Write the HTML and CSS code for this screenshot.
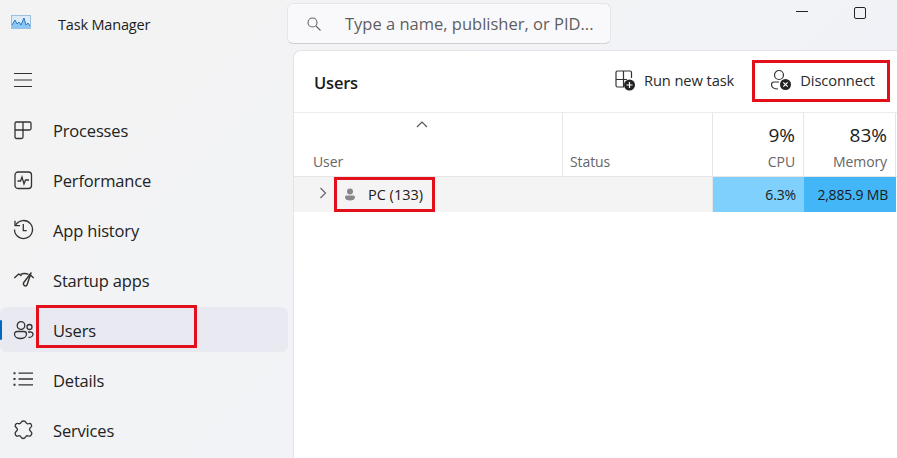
FILE: index.html
```html
<!DOCTYPE html>
<html lang="en">
<head>
<meta charset="utf-8">
<title>Task Manager</title>
<link rel="stylesheet" href="styles.css">
</head>
<body>
<div class="app">
  <aside class="sidebar">
    <div class="brand">
      <svg class="logo" width="20" height="14" viewBox="0 0 20 14"><rect x="0.5" y="0.5" width="19" height="13" fill="#dcebf8" stroke="#9cc0de"/><path d="M1 13V10L4 5L6 9L8 7L10 10L13 3L15 10L17 8L19 11V13Z" fill="#8cc6f2"/><path d="M1 10L4 5L6 9L8 7L10 10L13 3L15 10L17 8L19 11" fill="none" stroke="#2a78c4" stroke-width="1"/></svg>
      <span class="brand-name">Task Manager</span>
    </div>
    <div class="menu">
      <svg class="icon" width="20" height="20" viewBox="0 0 20 20"><path d="M1 4.500H19M1 11H19M1 17.500H19" stroke="#333" stroke-width="1.200" fill="none"/></svg>
    </div>
    <nav class="nav">
      <div class="nav-item">
        <svg class="icon" width="20" height="20" viewBox="0 0 20 20" fill="none" stroke="#333" stroke-width="1.300"><path d="M1 10V3.500A1.500 1.500 0 0 1 2.500 2H15.500A1.500 1.500 0 0 1 17 3.500V8.500A1.500 1.500 0 0 1 15.500 10H9V17A1.500 1.500 0 0 1 7.500 18.500H2.500A1.500 1.500 0 0 1 1 17Z"/><path d="M9 2V10H1"/></svg>
        <span>Processes</span>
      </div>
      <div class="nav-item">
        <svg class="icon" width="20" height="20" viewBox="0 0 20 20" fill="none" stroke="#333" stroke-width="1.300"><rect x="1" y="2" width="16.500" height="16.500" rx="3"/><path d="M3.500 11H6.500L8 7L10 14L11.500 10H15"/></svg>
        <span>Performance</span>
      </div>
      <div class="nav-item">
        <svg class="icon" width="20" height="20" viewBox="0 0 20 20" fill="none" stroke="#333" stroke-width="1.300"><path d="M1.700 5A9 9 0 1 1 0.500 9.500"/><path d="M1 0.700V5.700H6"/><path d="M9.300 4V10.700H12.700"/></svg>
        <span>App history</span>
      </div>
      <div class="nav-item">
        <svg class="icon" width="20" height="20" viewBox="-1 0 20 20" fill="none" stroke="#333" stroke-width="1.400" stroke-linejoin="round"><path d="M-0.700 8L3.700 4L6.500 5.800"/><path d="M5.500 4.300C8 3.300 11 3.300 13.500 4.300"/><path d="M14.500 4.300L18.700 8"/><path d="M16 3L8.800 12.500A2 2 0 0 0 12 15Z"/></svg>
        <span>Startup apps</span>
      </div>
      <div class="nav-item is-active">
        <svg class="icon" width="20" height="20" viewBox="0 0 20 20" fill="none" stroke="#333" stroke-width="1.300"><circle cx="7" cy="5.500" r="3.800"/><circle cx="15.500" cy="7" r="2.500"/><path d="M0.500 14A2.500 2.500 0 0 1 3 11.500H10A2.500 2.500 0 0 1 12.500 14C12.500 17 9.500 18.500 6.500 18.500S0.500 17 0.500 14Z"/><path d="M14 12H16.500A2.500 2.500 0 0 1 19 14C19 16 17 17.500 14.500 17.500"/></svg>
        <span>Users</span>
      </div>
      <div class="nav-item">
        <svg class="icon" width="20" height="20" viewBox="0 0 20 20" fill="none" stroke="#333" stroke-width="1.300"><path d="M4.500 3.200H19M4.500 9H19M4.500 14.800H19"/><path d="M-0.500 3.200H1.500M-0.500 9H1.500M-0.500 14.800H1.500" stroke-width="2"/></svg>
        <span>Details</span>
      </div>
      <div class="nav-item">
        <svg class="icon" width="20" height="20" viewBox="0 0 20 20" fill="none" stroke="#333" stroke-width="1.300" stroke-linejoin="round"><path d="M7 2.500C8 0.500 11 0.500 12 2.500C12.500 3.800 14 4 15.500 3.500C17 3.200 18 5.500 17.500 6.500C16.800 7.500 15.500 8 15.500 9.500C15.500 10.800 17.500 11.500 17.800 13C18 15 16 16.500 14.500 16C13 15.500 12 15.800 11.500 17C10.500 19 8 19 7 17C6.500 15.800 5 15.500 4 16C2.500 16.500 0.800 15 1.200 13C1.500 11.500 3.500 11 3.500 9.500C3.500 8 1.500 7.500 1.200 6C1 4.500 2.500 3 4 3.500C5 4 6.500 3.800 7 2.500Z"/></svg>
        <span>Services</span>
      </div>
    </nav>
  </aside>
  <div class="content">
    <div class="topbar">
      <div class="search">
        <svg class="search-icon" width="14" height="14" viewBox="0 0 14 14" fill="none" stroke="#666" stroke-width="1.100"><circle cx="5.500" cy="5.500" r="4.500"/><path d="M9 9L13.500 13.500"/></svg>
        <span class="search-text">Type a name, publisher, or PID...</span>
      </div>
      <div class="window-controls">
        <span class="win-min"></span>
        <span class="win-max"></span>
      </div>
    </div>
    <main class="panel">
      <header class="panel-head">
        <h1 class="panel-title">Users</h1>
        <div class="actions">
          <div class="action action-run">
            <svg width="21" height="21" viewBox="0 0 21 21" fill="none" stroke="#333" stroke-width="1.200"><path d="M1 10V2.500A1.500 1.500 0 0 1 2.500 1H15A1.500 1.500 0 0 1 16.500 2.500V8M8.500 1V17H2.500A1.500 1.500 0 0 1 1 15.500V9.500H12"/><circle cx="14.500" cy="15" r="5.500" fill="#222" stroke="none"/><path d="M14.500 12V18M11.500 15H17.500" stroke="#fff"/></svg>
            <span>Run new task</span>
          </div>
          <div class="action action-disconnect">
            <svg width="22" height="22" viewBox="0 0 22 22" fill="none" stroke="#333" stroke-width="1.200"><circle cx="9" cy="6" r="4.500"/><path d="M9 13H4A2.500 2.500 0 0 0 1.500 15.500C1.500 18 4 20 8 20"/><circle cx="15.500" cy="15.500" r="5.500" fill="#222" stroke="none"/><path d="M13.300 13.300L17.700 17.700M17.700 13.300L13.300 17.700" stroke="#fff"/></svg>
            <span>Disconnect</span>
          </div>
        </div>
      </header>
      <div class="table">
        <div class="th th-user">
          <svg class="sort" width="12" height="7" viewBox="0 0 12 7" fill="none" stroke="#555" stroke-width="1.200"><path d="M1 6L6 1L11 6"/></svg>
          <span class="th-label">User</span>
        </div>
        <div class="th th-status"><span class="th-label">Status</span></div>
        <div class="th th-num"><span class="th-value">9%</span><span class="th-label">CPU</span></div>
        <div class="th th-num"><span class="th-value">83%</span><span class="th-label">Memory</span></div>
        <div class="th th-end"></div>
        <div class="td td-user">
          <svg class="chevron" width="8" height="12" viewBox="0 0 8 12" fill="none" stroke="#666" stroke-width="1.200"><path d="M1.500 1L6.500 6L1.500 11"/></svg>
          <svg class="person" width="12" height="14" viewBox="0 0 12 14" fill="#888"><circle cx="6" cy="3.500" r="3"/><path d="M1 9A1.500 1.500 0 0 1 2.500 7.500H9.500A1.500 1.500 0 0 1 11 9C11 11.500 9 12.500 6 12.500S1 11.500 1 9Z"/></svg>
          <span>PC (133)</span>
        </div>
        <div class="td td-status"></div>
        <div class="td td-cpu">6.3%</div>
        <div class="td td-mem">2,885.9 MB</div>
        <div class="td td-end"></div>
      </div>
    </main>
  </div>
</div>
<div class="mark mark-users"></div>
<div class="mark mark-pc"></div>
<div class="mark mark-disconnect"></div>
</body>
</html>
```
FILE: styles.css
```css
* { box-sizing: border-box; }
html, body { margin: 0; height: 458px; overflow: hidden; }
body {
  position: relative;
  font-family: "Open Sans", "Noto Sans", sans-serif;
  color: #1b1b1b;
  background: linear-gradient(135deg, #f3f3f3 0%, #f2f3f6 50%, #eef1fa 100%);
}
.app { display: flex; height: 458px; }
.sidebar { width: 293px; flex: none; display: flex; flex-direction: column; }
.brand { display: flex; align-items: center; height: 50px; padding: 0 0 1px 11px; }
.logo { margin-top: -5px; }
.brand-name { margin-left: 27px; font-size: 14.500px; margin-top: -1px; letter-spacing: -0.17px; }
.menu { height: 55px; display: flex; align-items: center; padding: 3px 0 0 13px; }
.nav { display: flex; flex-direction: column; }
.nav-item {
  position: relative;
  height: 50px;
  display: flex;
  align-items: center;
  gap: 19px;
  padding-left: 14px;
  margin-right: 5px;
  font-size: 16.500px;
  letter-spacing: -0.17px;
  color: #222;
  border-radius: 6px;
}
.nav-item.is-active { height: 45px; margin: 2px 5px 3px 0; background: #e9eaf1; }
.nav-item.is-active span { margin-top: 2px; }
.nav-item.is-active::before {
  content: "";
  position: absolute;
  left: 0;
  top: 13px;
  width: 2px;
  height: 20px;
  border-radius: 2px;
  background: #0067c0;
}
.icon { flex: none; overflow: visible; }
.content { flex: 1; min-width: 0; display: flex; flex-direction: column; }
.topbar { height: 50px; flex: none; display: flex; margin-left: -6px; position: relative; }
.search {
  width: 324px;
  height: 41px;
  margin-top: 3px;
  display: flex;
  align-items: center;
  padding-left: 19px;
  background: #f9f9fc;
  border: 1px solid #e6e6ea;
  border-bottom-color: #cfcfd4;
  border-radius: 6px;
}
.search-icon { flex: none; }
.search-text { margin-left: 24px; font-size: 16.500px; color: #5f5f5f; white-space: nowrap; }
.window-controls { display: flex; align-items: flex-start; margin-left: 185px; gap: 46px; padding-top: 7px; }
.win-min { width: 12px; height: 1px; background: #222; margin-top: 4px; }
.win-max { width: 12px; height: 12px; border: 1.500px solid #222; border-radius: 2px; }
.panel {
  flex: 1;
  background: #fff;
  border-top: 1px solid #e4e4e8;
  border-left: 1px solid #e4e4e8;
  border-top-left-radius: 8px;
  display: flex;
  flex-direction: column;
}
.panel-head {
  height: 62px;
  flex: none;
  display: flex;
  align-items: center;
  padding: 0 22px 0 20px;
  border-bottom: 1px solid #ececec;
}
.panel-title { margin: 2px 0 0; font-size: 16.500px; font-weight: 600; letter-spacing: -0.2px; color: #1b1b1b; }
.actions { margin-left: auto; display: flex; align-items: center; margin-top: -3px; }
.action { display: flex; align-items: center; font-size: 14.700px; letter-spacing: -0.1px; color: #2a2a2a; white-space: nowrap; }
.action-run { gap: 8px; margin-right: 36px; }
.action-disconnect { gap: 8px; }
.table {
  display: grid;
  grid-template-columns: 269px 150px 91px 92px 1fr;
  grid-template-rows: 64px 35px;
}
.th {
  display: flex;
  flex-direction: column;
  justify-content: flex-end;
  padding: 0 8px 4px;
  border-right: 1px solid #e6e6e6;
  border-bottom: 1px solid #e6e6e6;
  position: relative;
}
.th-user { padding-left: 19px; }
.th-status { padding-left: 7px; }
.th-num { align-items: flex-end; }
.th-end { border-right: 0; }
.sort { position: absolute; left: 122px; top: 8px; }
.th-label { font-size: 14px; letter-spacing: -0.1px; color: #666; line-height: 20px; }
.th-value { font-size: 19px; color: #1b1b1b; line-height: 26px; margin-bottom: 4px; }
.td {
  height: 35px;
  display: flex;
  align-items: center;
  font-size: 14px;
  letter-spacing: -0.15px;
  background: #f4f4f4;
}
.td-user { padding-left: 25px; color: #1b1b1b; font-size: 14.500px; letter-spacing: 0; }
.chevron { margin-top: -3px; }
.person { margin-left: 17px; }
.td-user span { margin-left: 12px; }
.td-status { border-right: 1px solid #e6e6e6; }
.td-cpu { background: #7fd0fc; justify-content: flex-end; padding-right: 8px; }
.td-mem { background: #43b6f8; justify-content: flex-end; padding-right: 8px; letter-spacing: -0.2px; }
.td-end { background: #fff; }
.mark { position: absolute; border: 3px solid #e3101c; pointer-events: none; }
.mark-users { left: 36px; top: 305px; width: 161px; height: 43px; }
.mark-pc { left: 334px; top: 177px; width: 101px; height: 35px; }
.mark-disconnect { left: 752px; top: 60px; width: 138px; height: 42px; }
```
